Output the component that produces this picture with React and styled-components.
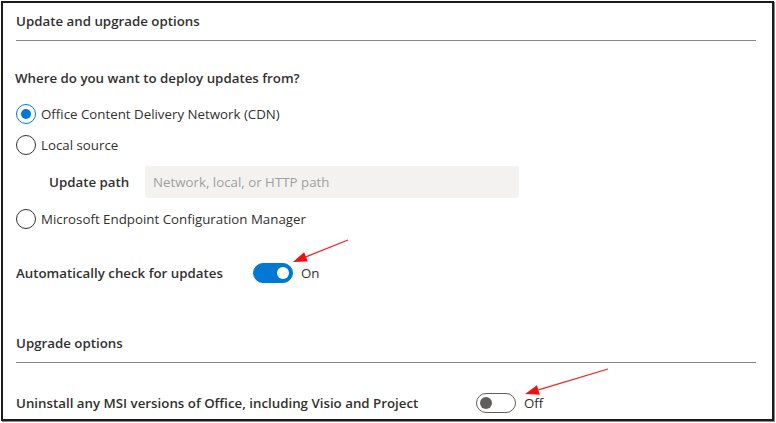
import React from 'react'
import styled, { createGlobalStyle } from 'styled-components'

const GlobalStyle = createGlobalStyle`
    html, body {
        margin: 0;
        padding: 0;
        background: #fff;
    }
    body {
        font-family: "Open Sans", "Noto Sans", sans-serif;
        color: #323130;
    }
`

const Page = styled.div`
    position: relative;
    width: 776px;
    height: 423px;
    padding: 1px;
    box-sizing: border-box;
`

const Panel = styled.div`
    width: 773px;
    height: 420px;
    box-sizing: border-box;
    border: 2px solid #1b1b1b;
    box-shadow: 1px 1px 0 #8a8a8a;
    padding: 0 16px 0 12px;
    display: flex;
    flex-direction: column;
`

const SectionTitle = styled.div`
    margin-top: ${p => p.top}px;
    font-size: 13.3px;
    font-weight: 600;
    line-height: 20px;
    padding-bottom: 9px;
    border-bottom: 1px solid #8a8886;
    margin-left: 1px;
`

const Question = styled.div`
    margin-top: 27px;
    font-size: 13.3px;
    font-weight: 600;
    line-height: 20px;
`

const Choices = styled.div`
    margin-top: 16px;
    display: flex;
    flex-direction: column;
    gap: 11px;
`

const RadioRow = styled.label`
    display: flex;
    align-items: center;
    gap: 5px;
    height: 20px;
    font-size: 13.3px;
    line-height: 20px;
    padding-left: 1px;
`

const RadioCircle = styled.span`
    width: 20px;
    height: 20px;
    box-sizing: border-box;
    border-radius: 50%;
    border: 1px solid ${p => (p.checked ? '#0078d4' : '#323130')};
    display: flex;
    align-items: center;
    justify-content: center;

    &::after {
        content: '';
        width: 10px;
        height: 10px;
        border-radius: 50%;
        background: ${p => (p.checked ? '#0078d4' : 'transparent')};
    }
`

const PathRow = styled.div`
    display: flex;
    align-items: center;
    height: 32px;
    padding-left: 34px;
`

const PathLabel = styled.span`
    width: 96px;
    font-size: 13.3px;
    font-weight: 600;
`

const PathInput = styled.input`
    width: 374px;
    height: 32px;
    box-sizing: border-box;
    border: none;
    border-radius: 2px;
    background: #f3f2f1;
    padding: 0 8px;
    font-family: inherit;
    font-size: 13.3px;
    color: #323130;
    outline: none;

    &::placeholder {
        color: #a19f9d;
    }
`

const ToggleRow = styled.div`
    margin-top: ${p => p.top}px;
    display: flex;
    align-items: center;
    height: 20px;
`

const ToggleLabel = styled.span`
    width: ${p => p.width}px;
    font-size: 13.3px;
    font-weight: 600;
    padding-left: 1px;
    box-sizing: border-box;
`

const Switch = styled.span`
    width: 40px;
    height: 20px;
    box-sizing: border-box;
    border-radius: 10px;
    border: 1px solid ${p => (p.on ? '#0078d4' : '#605e5c')};
    background: ${p => (p.on ? '#0078d4' : '#fff')};
    display: flex;
    align-items: center;
    justify-content: ${p => (p.on ? 'flex-end' : 'flex-start')};
    padding: 0 3px;

    &::after {
        content: '';
        width: 12px;
        height: 12px;
        border-radius: 50%;
        background: ${p => (p.on ? '#fff' : '#605e5c')};
    }
`

const SwitchText = styled.span`
    margin-left: 8px;
    font-size: 13.3px;
`

const Annotations = styled.svg`
    position: absolute;
    left: 0;
    top: 0;
    pointer-events: none;
`

function Arrow({ x1, y1, x2, y2 }) {
    const dx = x2 - x1
    const dy = y2 - y1
    const len = Math.hypot(dx, dy)
    const ux = dx / len
    const uy = dy / len
    const bx = x2 - ux * 14
    const by = y2 - uy * 14
    const px = -uy * 5
    const py = ux * 5
    return (
        <g>
            <line x1={x1} y1={y1} x2={bx} y2={by} stroke="#ee2222" strokeWidth="1.3" />
            <polygon points={`${x2},${y2} ${bx + px},${by + py} ${bx - px},${by - py}`} fill="#ee1111" />
        </g>
    )
}

export default function App() {
    return (
        <Page>
            <GlobalStyle />
            <Panel>
                <SectionTitle top={8}>Update and upgrade options</SectionTitle>
                <Question>Where do you want to deploy updates from?</Question>
                <Choices>
                    <RadioRow><RadioCircle checked />Office Content Delivery Network (CDN)</RadioRow>
                    <RadioRow><RadioCircle />Local source</RadioRow>
                    <PathRow>
                        <PathLabel>Update path</PathLabel>
                        <PathInput placeholder="Network, local, or HTTP path" />
                    </PathRow>
                    <RadioRow><RadioCircle />Microsoft Endpoint Configuration Manager</RadioRow>
                </Choices>
                <ToggleRow top={34}>
                    <ToggleLabel width={238}>Automatically check for updates</ToggleLabel>
                    <Switch on />
                    <SwitchText>On</SwitchText>
                </ToggleRow>
                <SectionTitle top={50}>Upgrade options</SectionTitle>
                <ToggleRow top={30}>
                    <ToggleLabel width={461}>Uninstall any MSI versions of Office, including Visio and Project</ToggleLabel>
                    <Switch />
                    <SwitchText>Off</SwitchText>
                </ToggleRow>
            </Panel>
            <Annotations width="776" height="423">
                <Arrow x1={348} y1={240} x2={293} y2={262} />
                <Arrow x1={608} y1={369} x2={525} y2={394} />
            </Annotations>
        </Page>
    )
}
